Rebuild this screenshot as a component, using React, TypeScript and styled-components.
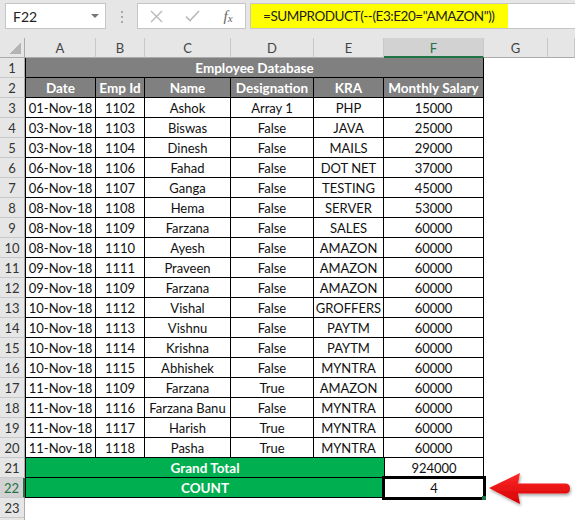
import { FunctionComponent } from 'react';
import styled, { createGlobalStyle } from 'styled-components';

const GlobalStyle = createGlobalStyle`
  html, body {
    margin: 0;
    padding: 0;
    background: #fff;
    overflow: hidden;
  }
`;

const COLUMNS = ['A', 'B', 'C', 'D', 'E', 'F', 'G'];

const ROWS: string[][] = [
  ['01-Nov-18', '1102', 'Ashok', 'Array 1', 'PHP', '15000'],
  ['03-Nov-18', '1103', 'Biswas', 'False', 'JAVA', '25000'],
  ['03-Nov-18', '1104', 'Dinesh', 'False', 'MAILS', '29000'],
  ['06-Nov-18', '1106', 'Fahad', 'False', 'DOT NET', '37000'],
  ['06-Nov-18', '1107', 'Ganga', 'False', 'TESTING', '45000'],
  ['08-Nov-18', '1108', 'Hema', 'False', 'SERVER', '53000'],
  ['08-Nov-18', '1109', 'Farzana', 'False', 'SALES', '60000'],
  ['08-Nov-18', '1110', 'Ayesh', 'False', 'AMAZON', '60000'],
  ['09-Nov-18', '1111', 'Praveen', 'False', 'AMAZON', '60000'],
  ['09-Nov-18', '1109', 'Farzana', 'False', 'AMAZON', '60000'],
  ['10-Nov-18', '1112', 'Vishal', 'False', 'GROFFERS', '60000'],
  ['10-Nov-18', '1113', 'Vishnu', 'False', 'PAYTM', '60000'],
  ['10-Nov-18', '1114', 'Krishna', 'False', 'PAYTM', '60000'],
  ['10-Nov-18', '1115', 'Abhishek', 'False', 'MYNTRA', '60000'],
  ['11-Nov-18', '1109', 'Farzana', 'True', 'AMAZON', '60000'],
  ['11-Nov-18', '1116', 'Farzana Banu', 'False', 'MYNTRA', '60000'],
  ['11-Nov-18', '1117', 'Harish', 'True', 'MYNTRA', '60000'],
  ['11-Nov-18', '1118', 'Pasha', 'True', 'MYNTRA', '60000'],
];

const HEADINGS = ['Date', 'Emp Id', 'Name', 'Designation', 'KRA', 'Monthly Salary'];

const App: FunctionComponent = () => {
  return (
    <Page>
      <GlobalStyle />
      <TopBar>
        <NameBox>
          <span>F22</span>
          <Caret />
        </NameBox>
        <Grip>
          <Dot />
          <Dot />
          <Dot />
        </Grip>
        <EditBox>
          <IconSlot>
            <svg width="13" height="13" viewBox="0 0 13 13">
              <path d="M1 1 L12 12 M12 1 L1 12" stroke="#b9b9b9" strokeWidth="1.4" fill="none" />
            </svg>
          </IconSlot>
          <IconSlot>
            <svg width="15" height="12" viewBox="0 0 15 12">
              <path d="M1 6.5 L5 10.5 L14 1" stroke="#b9b9b9" strokeWidth="1.6" fill="none" />
            </svg>
          </IconSlot>
          <IconSlot>
            <Fx>
              f<sub>x</sub>
            </Fx>
          </IconSlot>
        </EditBox>
        <FormulaBox>
          <FormulaText>=SUMPRODUCT(--(E3:E20="AMAZON"))</FormulaText>
        </FormulaBox>
      </TopBar>

      <Grid>
        <Corner />
        {COLUMNS.map((c) => (
          <ColHead key={c} $active={c === 'F'}>
            {c}
          </ColHead>
        ))}
        <ColHead />

        <RowHead>1</RowHead>
        <TitleCell>Employee Database</TitleCell>
        <Blank />
        <Blank />

        <RowHead>2</RowHead>
        {HEADINGS.map((h, i) => (
          <HeadCell key={h} $first={i === 0}>
            {h}
          </HeadCell>
        ))}
        <Blank />
        <Blank />

        {ROWS.map((row, r) => (
          <Row key={r} num={r + 3} cells={row} />
        ))}

        <RowHead>21</RowHead>
        <SumLabel>Grand Total</SumLabel>
        <SumValue>924000</SumValue>
        <Blank />
        <Blank />

        <RowHead $active>22</RowHead>
        <SumLabel>COUNT</SumLabel>
        <SumValue $selected>4</SumValue>
        <Blank />
        <Blank />

        <EmptyRow label="23" />
        <EmptyRow label="" />
      </Grid>

      <Arrow width="89" height="40" viewBox="0 0 89 40">
        <defs>
          <linearGradient id="arrowFill" x1="0" y1="0" x2="0" y2="1">
            <stop offset="0" stopColor="#ff2a2a" />
            <stop offset="1" stopColor="#d30000" />
          </linearGradient>
          <filter id="arrowShadow" x="-20%" y="-30%" width="140%" height="170%">
            <feDropShadow dx="1" dy="2" stdDeviation="1.5" floodColor="#000" floodOpacity="0.35" />
          </filter>
        </defs>
        <path
          d="M3 18 L34 3 L32 13.5 L79 13.5 Q84 13.5 84 18.5 Q84 23.5 79 23.5 L32 23.5 L34 34 Z"
          fill="url(#arrowFill)"
          filter="url(#arrowShadow)"
        />
      </Arrow>
    </Page>
  );
};

const Row: FunctionComponent<{ num: number; cells: string[] }> = ({ num, cells }) => (
  <>
    <RowHead>{num}</RowHead>
    {cells.map((c, i) => (
      <Cell key={i} $first={i === 0}>
        {c}
      </Cell>
    ))}
    <Blank />
    <Blank />
  </>
);

// row 24 only peeks in at the bottom edge, so it has no visible number
const EmptyRow: FunctionComponent<{ label: string }> = ({ label }) => (
  <>
    <RowHead>{label}</RowHead>
    {Array.from({ length: 8 }).map((_, i) => (
      <Blank key={i} />
    ))}
  </>
);

export default App;

const Page = styled.div`
  position: relative;
  width: 575px;
  height: 520px;
  overflow: hidden;
  background: #fff;
  font-family: Lato, 'Liberation Sans', sans-serif;
`;

const TopBar = styled.div`
  display: flex;
  align-items: flex-start;
  height: 38px;
  padding-top: 3px;
  box-sizing: border-box;
  background: #e6e6e6;
`;

const NameBox = styled.div`
  display: flex;
  align-items: center;
  justify-content: space-between;
  margin-left: 5px;
  width: 101px;
  height: 26px;
  padding: 0 6px 0 7px;
  box-sizing: border-box;
  background: #fff;
  border: 1px solid #c6c6c6;
  font-size: 14px;
  color: #222;
`;

const Caret = styled.span`
  width: 0;
  height: 0;
  border-left: 4px solid transparent;
  border-right: 4px solid transparent;
  border-top: 4px solid #777;
`;

const Grip = styled.div`
  display: flex;
  flex-direction: column;
  align-items: center;
  gap: 3px;
  width: 31px;
  padding-top: 8px;
`;

const Dot = styled.span`
  width: 2px;
  height: 2px;
  background: #a8a8a8;
`;

const EditBox = styled.div`
  display: grid;
  grid-template-columns: repeat(3, 36px);
  align-items: center;
  width: 109px;
  height: 26px;
  box-sizing: border-box;
  background: #fff;
  border: 1px solid #c6c6c6;
`;

const IconSlot = styled.span`
  display: flex;
  justify-content: center;
  align-items: center;
`;

const Fx = styled.span`
  font-family: 'Liberation Serif', serif;
  font-style: italic;
  font-size: 15px;
  color: #666;

  sub {
    font-size: 11px;
    vertical-align: -1px;
  }
`;

const FormulaBox = styled.div`
  display: flex;
  flex: 1;
  margin-left: 4px;
  height: 26px;
  box-sizing: border-box;
  background: #fff;
  border: 1px solid #c6c6c6;
  border-right: none;
`;

const FormulaText = styled.span`
  width: 257px;
  padding-left: 12px;
  box-sizing: border-box;
  background: #ffff00;
  font-size: 13.5px;
  letter-spacing: -0.45px;
  line-height: 24px;
  color: #222;
  white-space: nowrap;
`;

const Grid = styled.div`
  display: grid;
  grid-template-columns: 25px 71px 49px 86px 83px 70px 100px 64px 1fr;
  grid-auto-rows: 20px;
  font-size: 13px;
`;

const Corner = styled.div`
  box-sizing: border-box;
  background: #e6e6e6 linear-gradient(to top left, #b4b4b4 50%, transparent 50%) no-repeat;
  background-size: 12px 12px;
  background-position: right 3px bottom 3px;
  border-right: 1px solid #ababab;
  border-bottom: 1px solid #ababab;
`;

const ColHead = styled.div<{ $active?: boolean }>`
  box-sizing: border-box;
  background: ${(p) => (p.$active ? '#d2d2d2' : '#e6e6e6')};
  color: ${(p) => (p.$active ? '#217346' : '#444')};
  border-right: 1px solid #c8c8c8;
  border-bottom: ${(p) => (p.$active ? '2px solid #217346' : '1px solid #ababab')};
  text-align: center;
  line-height: 21px;
`;

const RowHead = styled.div<{ $active?: boolean }>`
  box-sizing: border-box;
  background: ${(p) => (p.$active ? '#d2d2d2' : '#e6e6e6')};
  color: ${(p) => (p.$active ? '#217346' : '#333')};
  border-bottom: 1px solid #c8c8c8;
  border-right: ${(p) => (p.$active ? '2px solid #217346' : '1px solid #ababab')};
  text-align: center;
  line-height: 21px;
`;

const TitleCell = styled.div`
  grid-column: span 6;
  box-sizing: border-box;
  background: #808080;
  color: #fff;
  font-weight: 700;
  font-size: 13.5px;
  text-align: center;
  line-height: 21px;
  border-left: 1px solid #000;
  border-right: 1px solid #000;
  border-bottom: 1px solid #000;
`;

const HeadCell = styled.div<{ $first?: boolean }>`
  box-sizing: border-box;
  background: #808080;
  color: #fff;
  font-weight: 700;
  font-size: 13.5px;
  text-align: center;
  line-height: 21px;
  white-space: nowrap;
  border-right: 1px solid #000;
  border-bottom: 1px solid #000;
  border-left: ${(p) => (p.$first ? '1px solid #000' : 'none')};
`;

const Cell = styled.div<{ $first?: boolean }>`
  box-sizing: border-box;
  color: #111;
  text-align: center;
  line-height: 21px;
  white-space: nowrap;
  border-right: 1px solid #000;
  border-bottom: 1px solid #000;
  border-left: ${(p) => (p.$first ? '1px solid #000' : 'none')};
`;

const SumLabel = styled.div`
  grid-column: span 5;
  box-sizing: border-box;
  background: #00b050;
  color: #fff;
  font-weight: 700;
  font-size: 13.5px;
  text-align: center;
  line-height: 21px;
  border-left: 1px solid #000;
  border-bottom: 1px solid #000;
`;

const SumValue = styled.div<{ $selected?: boolean }>`
  position: relative;
  box-sizing: border-box;
  color: #111;
  text-align: center;
  line-height: 21px;
  border-left: 1px solid #000;
  border-right: 1px solid #000;
  border-bottom: 1px solid #000;
  outline: ${(p) => (p.$selected ? '3px solid #000' : 'none')};
  outline-offset: -1px;

  &::after {
    content: '';
    display: ${(p) => (p.$selected ? 'block' : 'none')};
    position: absolute;
    right: -3px;
    bottom: -3px;
    width: 4px;
    height: 4px;
    background: #217346;
  }
`;

const Blank = styled.div`
  background: #fff;
`;

const Arrow = styled.svg`
  position: absolute;
  left: 486px;
  top: 470px;
`;
